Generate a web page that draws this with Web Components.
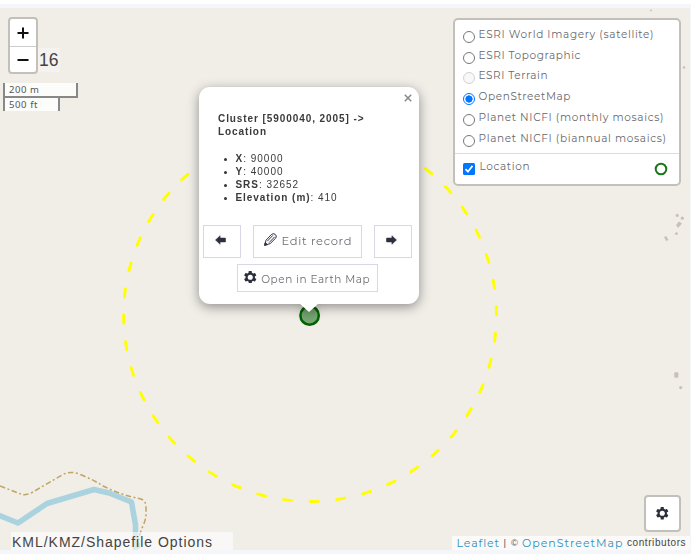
<!DOCTYPE html>
<html lang="en">
<head>
<meta charset="utf-8">
<title>Map</title>
<style>
html,body{margin:0;width:691px;height:554px;overflow:hidden;background:#fff}
body{font-family:"Liberation Sans",Arial,sans-serif}
</style>
</head>
<body>
<map-page></map-page>
<script>
const define = (name, html, setup) => customElements.define(name, class extends HTMLElement {
  connectedCallback() {
    if (this.shadowRoot) return;
    const t = document.createElement('template');
    t.innerHTML = html;
    this.attachShadow({mode: 'open'}).append(t.content.cloneNode(true));
    if (setup) setup.call(this, this.shadowRoot);
  }
});

// One line of text, tracked so that it fills the width given in w.
define('tracked-text', `<style>:host{display:inline-block;white-space:pre}span{display:inline-block}</style><span><slot></slot></span>`, function (root) {
  const s = root.querySelector('span'), w = +this.getAttribute('w');
  const n = this.textContent.length;
  s.style.letterSpacing = '0px';
  const cur = s.getBoundingClientRect().width;
  const gap = (w - cur) / (n - 1);
  s.style.letterSpacing = gap + 'px';
  s.style.marginRight = -gap + 'px';
});

define('gear-icon', `<style>:host{display:block;width:12.500px;height:12.500px}svg{display:block;width:100%;height:100%}</style>
<svg viewBox="-12 -12 24 24"><g fill="#2c2f3c"><rect x="-3" y="-12" width="6" height="24" rx="1"/><rect x="-3" y="-12" width="6" height="24" rx="1" transform="rotate(60)"/><rect x="-3" y="-12" width="6" height="24" rx="1" transform="rotate(120)"/><circle r="9"/></g><circle r="4.9" fill="#fff"/></svg>`);

define('arrow-icon', `<style>:host{display:block;width:11px;height:10px}:host([right]){transform:scaleX(-1)}svg{display:block}</style>
<svg width="11" height="10" viewBox="0 0 11 10"><path d="M.5 5 5.1.7V3H10q.6 0 .6.6v2.8q0 .6-.6.6H5.1v2.3z" fill="#2c2f3c" stroke="#2c2f3c" stroke-width=".5" stroke-linejoin="round"/></svg>`);

define('pencil-icon', `<style>:host{display:block;width:13px;height:13px}svg{display:block}</style>
<svg width="13" height="13" viewBox="0 0 13 13" fill="none" stroke="#343744" stroke-width="1" stroke-linejoin="round"><path d="M.7 12.2 2 7.2 7.300 1.6Q9-.1 11.2 1.3 13.2 3 11.800 5L6.200 10.6zM3.300 8.200 8.800 2.400M5.100 9.600 10.700 3.800"/><path d="M.5 12.400 1.200 9.600 3.500 11.6z" fill="#343744"/></svg>`);

define('map-canvas', `<style>:host{display:block;width:690px;height:542px}svg{display:block}</style>
<svg width="690" height="542" viewBox="0 8 690 542">
<rect y="8" width="690" height="542" fill="#f1eee8"/>
<g fill="#cbc0b8"><circle cx="651" cy="10.5" r="1"/><circle cx="684" cy="67.5" r="1.3"/><circle cx="677.2" cy="215.4" r="1.6"/><circle cx="682.3" cy="218.2" r="1.6"/><path d="m676 225 3-3.5 3 2-4 4.5z"/><circle cx="676.4" cy="233.7" r="1.4"/><path d="m664 237 2.3-1 2.2 4-2.5 1z"/><rect x="674.3" y="372.3" width="4" height="5.5" rx="1"/><circle cx="680.7" cy="387.6" r="1.6"/></g>
<path d="M-2 515 18 523 47 503.500 94 489.500 109 493 131.500 502 135.500 525V551" fill="none" stroke="#aad3df" stroke-width="5.600" stroke-linejoin="round"/>
<path d="M0 486 22 494.500Q26 495.500 33 492L62 475Q70 470.500 79 474 92 479 103 486 117 493 132 497L141 499Q146 501 146 507V516Q145 522 142 528L139 537V550" fill="none" stroke="#c1a366" stroke-width="1.500" stroke-dasharray="5.500 2.500 2 2.500"/>
<path d="M123.600 315A186.400 186.400 0 1 0 496.400 315A186.400 186.400 0 1 0 123.600 315" fill="none" stroke="#ff0" stroke-width="2.900" stroke-linecap="round" stroke-dasharray="8.300 18.320"/>
<circle cx="309.600" cy="315.500" r="9.200" fill="#006400" fill-opacity=".5" stroke="#006400" stroke-width="2.500"/>
</svg>`);

define('zoom-control', `<style>:host{display:flex;align-items:flex-end}
.bar{box-sizing:border-box;width:30px;height:57px;border:2px solid #c3c0bb;border-radius:4px;background:#fff;display:grid;grid-template-rows:27px 26px;overflow:hidden}
.b{display:grid;place-items:center}.b+.b{border-top:1px solid #ccc;box-sizing:border-box}svg{display:block}
.n{width:22px;height:24px;background:#ffffff4d;font:17.500px/25px "Liberation Sans",sans-serif;color:#444;margin-bottom:2px;padding-left:1px;box-sizing:border-box;white-space:nowrap}</style>
<div class="bar"><div class="b"><svg width="12" height="12"><path d="M6 .5v11M.5 6h11" stroke="#111" stroke-width="2"/></svg></div><div class="b"><svg width="12" height="4"><path d="M.5 2h11" stroke="#111" stroke-width="2"/></svg></div></div><div class="n"><tracked-text w="19.5">16</tracked-text></div>`);

define('scale-bar', `<style>:host{display:block;color:#555;font:9.500px/13px "Noto Sans",sans-serif}
div{box-sizing:border-box;border:2px solid #888;border-top:0;background:#fffc;padding-left:4px;height:15px;width:75px}
div+div{border-bottom:0;border-width:0 2px;height:13px;width:57px;line-height:13px}</style>
<div><tracked-text w="30">200 m</tracked-text></div><div><tracked-text w="28.5">500 ft</tracked-text></div>`);

define('box-button', `<style>:host{box-sizing:border-box;display:flex;align-items:center;justify-content:center;border:1px solid #d8d7e5;background:#fff;color:#6d6d74;font-family:Montserrat,Inter,sans-serif}</style><slot></slot>`);

define('map-popup', `<style>:host{display:block;width:220px;height:217px;filter:drop-shadow(0 3px 6px #0006)}
.card{box-sizing:border-box;width:220px;height:217px;background:#fff;border-radius:11px;padding:25px 7px 0 4px;color:#3a3a3a;font:10px/13.300px "Liberation Sans",sans-serif;position:relative}
.x{position:absolute;right:7.500px;top:7px;display:block}
.title,ul{margin-left:15px}.title{font-weight:700}.title tracked-text{display:block;height:13.300px}
ul{list-style:none;padding:0;margin-top:13px;margin-bottom:0}
li{display:flex;align-items:center;height:13.150px;padding-left:6px}
li:before{content:"";width:3px;height:3px;border-radius:50%;background:#333;margin-right:8.500px;margin-top:2px}
.row{display:flex;justify-content:space-between;margin-top:21px;width:209px}
.row box-button{height:33px;width:38px;padding-right:4px;padding-bottom:3px}.row .e{width:109px;gap:5px;font-size:11.500px;padding:0}
.e pencil-icon{margin-top:-4px}
.earth{width:141px;height:28px;margin:6px 0 0 33.500px;gap:4.500px;font-size:10.500px}.earth gear-icon{margin-top:-2px}.earth tracked-text{margin-top:2px}
.tip{display:block;margin:-1px 0 0 99px}</style>
<div class="card"><svg class="x" width="8" height="8"><path d="m.8.8 6.400 6.400m0-6.400L.8 7.200" stroke="#888" stroke-width="1.500"/></svg>
<div class="title"><tracked-text w="145.5">Cluster [5900040, 2005] -&gt;</tracked-text><tracked-text w="48">Location</tracked-text></div>
<ul><li><tracked-text w="47"><b>X</b>: 90000</tracked-text></li><li><tracked-text w="47"><b>Y</b>: 40000</tracked-text></li><li><tracked-text w="62.5"><b>SRS</b>: 32652</tracked-text></li><li><tracked-text w="101"><b>Elevation (m)</b>: 410</tracked-text></li></ul>
<div class="row"><box-button><arrow-icon></arrow-icon></box-button><box-button class="e"><pencil-icon></pencil-icon><tracked-text w="70">Edit record</tracked-text></box-button><box-button><arrow-icon right></arrow-icon></box-button></div>
<box-button class="earth"><gear-icon></gear-icon><tracked-text w="108.5">Open in Earth Map</tracked-text></box-button></div>
<svg class="tip" width="22" height="10"><path d="M1 0h20L11 9z" fill="#fff"/></svg>`);

define('layer-row', `<style>:host{display:flex;height:20.800px;align-items:center;gap:3.500px;color:#68686d;font:10.500px/20px Montserrat,Inter,sans-serif}
i{box-sizing:border-box;width:12px;height:12px;border:1px solid #777;border-radius:50%;background:#fff;margin-top:4px;flex:none}
:host([off]) i{border-color:#d3d3d3;background:#f8f8f8}
:host([on]) i{border-color:#0075ff;background:radial-gradient(circle,#0075ff 3.300px,#fff 3.900px)}</style><i></i><slot></slot>`);

define('layers-control', `<style>:host{box-sizing:border-box;display:block;width:228px;height:168px;border:2px solid #c3c0bb;border-radius:5px;background:#fff;padding:4.500px 0 0 8px}
.sep{border-top:1px solid #ddd;margin:3.700px 0 0 -8px}
.loc{display:flex;align-items:center;height:30px;color:#68686d;font:10.500px/20px Montserrat,Inter,sans-serif}.loc svg{display:block}.loc tracked-text{margin:-3px 0 0 4.500px}.ring{margin-left:124.500px}</style>
<layer-row><tracked-text w="175">ESRI World Imagery (satellite)</tracked-text></layer-row>
<layer-row><tracked-text w="102">ESRI Topographic</tracked-text></layer-row>
<layer-row off><tracked-text w="69">ESRI Terrain</tracked-text></layer-row>
<layer-row on><tracked-text w="92">OpenStreetMap</tracked-text></layer-row>
<layer-row><tracked-text w="185">Planet NICFI (monthly mosaics)</tracked-text></layer-row>
<layer-row><tracked-text w="187.5">Planet NICFI (biannual mosaics)</tracked-text></layer-row>
<div class="sep"></div>
<div class="loc"><svg width="12" height="12"><rect width="12" height="12" rx="1.500" fill="#0075ff"/><path d="m2.500 6.200 2.400 2.500 4.600-5.800" fill="none" stroke="#fff" stroke-width="1.700"/></svg><tracked-text w="50">Location</tracked-text><svg class="ring" width="14" height="14"><circle cx="7" cy="7" r="5.300" fill="none" stroke="#187818" stroke-width="2"/></svg></div>`);

define('map-attribution', `<style>:host{box-sizing:border-box;width:238px;height:14px;background:#ffffffb3;display:flex;align-items:center;padding-left:4.500px;font:11px/14px Montserrat,Inter,sans-serif;color:#555;white-space:nowrap}
a{color:#2b91bd}.s{font:10px/14px "Liberation Sans",sans-serif;color:#444}.s.c{margin-left:4.500px}.m{margin:0 4px 0 4.500px;font:9.500px/14px "Liberation Sans",sans-serif}</style>
<a><tracked-text w="42.5">Leaflet</tracked-text></a><tracked-text class="m" w="14.5">| ©</tracked-text><a><tracked-text w="100.5">OpenStreetMap</tracked-text></a><tracked-text class="s c" w="58.5">contributors</tracked-text>`);

define('map-page', `<style>:host{display:block;position:relative;box-sizing:border-box;width:691px;height:554px;border-top:4px solid #fff;padding-top:4px;background:#f4f6f9;overflow:hidden}
.o{position:absolute}
.kml{left:11px;top:528px;width:222px;height:18px;background:#ffffff99;color:#444;font:14px/20px "Liberation Sans",sans-serif;box-sizing:border-box;padding-left:1px}
.gear{left:644px;top:491px;width:37px;height:37px;border:2px solid #c3c0bb;border-radius:4px;background:#fff;display:grid;place-items:center;box-sizing:border-box}</style>
<map-canvas></map-canvas>
<zoom-control class="o" style="left:8px;top:13px"></zoom-control>
<scale-bar class="o" style="left:3px;top:79px"></scale-bar>
<map-popup class="o" style="left:199px;top:83px"></map-popup>
<layers-control class="o" style="left:453px;top:14px"></layers-control>
<div class="o kml"><tracked-text w="200">KML/KMZ/Shapefile Options</tracked-text></div>
<div class="o gear"><gear-icon></gear-icon></div>
<map-attribution class="o" style="left:452px;top:532px"></map-attribution>`);
</script>
</body>
</html>
